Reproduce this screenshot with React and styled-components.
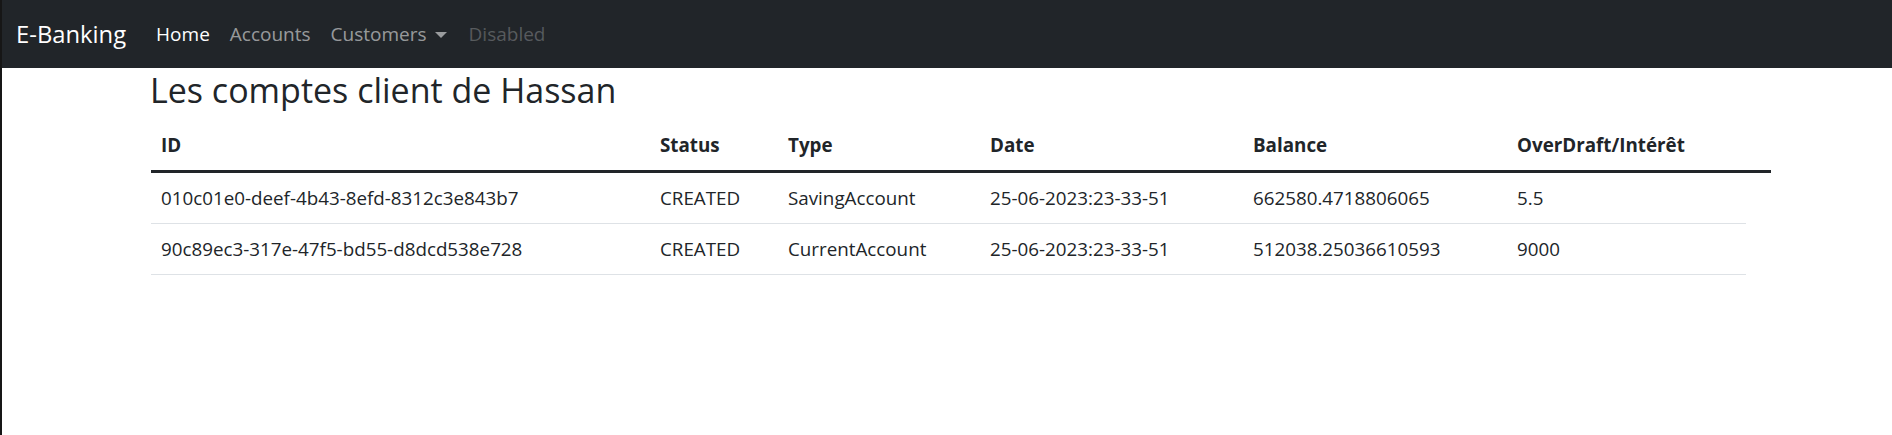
import React from "react";
import styled, { createGlobalStyle } from "styled-components";

const FONT = `"Open Sans", "Noto Sans", "Liberation Sans", sans-serif`;

const Global = createGlobalStyle`
  html, body { margin: 0; padding: 0; background: #fff; }
  body {
    font-family: ${FONT};
    color: #212529;
    border-left: 2px solid #161616;
    min-height: 435px;
    box-sizing: border-box;
  }
`;

const Navbar = styled.nav`
  display: flex;
  align-items: center;
  height: 68px;
  box-sizing: border-box;
  padding: 0 14px 0;
  background: #212529;
`;

const Brand = styled.a`
  font-size: 23.8px;
  line-height: 34px;
  color: #fff;
  text-decoration: none;
  margin-right: 20px;
  white-space: nowrap;
`;

const NavList = styled.ul`
  display: flex;
  align-items: center;
  list-style: none;
  margin: 0;
  padding: 0;
`;

const NavLink = styled.a`
  display: flex;
  align-items: baseline;
  padding: 0 10px;
  font-size: 19px;
  line-height: 30px;
  text-decoration: none;
  white-space: nowrap;
  color: ${(p) =>
    p.$active ? "#fff" : p.$disabled ? "rgba(255,255,255,0.25)" : "rgba(255,255,255,0.55)"};
`;

const Caret = styled.span`
  display: inline-block;
  width: 0;
  height: 0;
  margin-left: 8px;
  margin-right: 2px;
  border-top: 6px solid currentColor;
  border-left: 6px solid transparent;
  border-right: 6px solid transparent;
  align-self: center;
  position: relative;
  top: 1px;
`;

const Container = styled.main`
  margin-left: 149px;
  width: 1620px;
`;

const Title = styled.h3`
  margin: 0 0 7px -1px;
  font-size: 34px;
  line-height: 45px;
  font-weight: 500;
  color: #212529;
`;

const Table = styled.table`
  width: 1620px;
  border-collapse: collapse;
  table-layout: fixed;
  font-size: 18.8px;
  line-height: 30px;
  color: #212529;
`;

const Col = styled.col`
  width: ${(p) => p.$w}px;
`;

const Th = styled.th`
  padding: 10px;
  text-align: left;
  font-weight: 700;
  border-bottom: 1px solid #dee2e6;
  white-space: nowrap;
`;

const Body = styled.tbody`
  border-top: 3px solid #212529;
`;

const Td = styled.td`
  padding: 10px;
  border-bottom: 1px solid #dee2e6;
  white-space: nowrap;
`;

const widths = [499, 128, 202, 263, 264, 239, 25];
const headers = ["ID", "Status", "Type", "Date", "Balance", "OverDraft/Intérêt", ""];
const rows = [
  ["010c01e0-deef-4b43-8efd-8312c3e843b7", "CREATED", "SavingAccount", "25-06-2023:23-33-51", "662580.4718806065", "5.5"],
  ["90c89ec3-317e-47f5-bd55-d8dcd538e728", "CREATED", "CurrentAccount", "25-06-2023:23-33-51", "512038.25036610593", "9000"],
];

export default function App() {
  return (
    <>
      <Global />
      <Navbar>
        <Brand href="#">E-Banking</Brand>
        <NavList>
          <li><NavLink $active href="#">Home</NavLink></li>
          <li><NavLink href="#">Accounts</NavLink></li>
          <li><NavLink href="#">Customers<Caret /></NavLink></li>
          <li><NavLink $disabled>Disabled</NavLink></li>
        </NavList>
      </Navbar>
      <Container>
        <Title>Les comptes client de Hassan</Title>
        <Table>
          <colgroup>
            {widths.map((w, i) => <Col key={i} $w={w} />)}
          </colgroup>
          <thead>
            <tr>
              {headers.map((h, i) => <Th key={i}>{h}</Th>)}
            </tr>
          </thead>
          <Body>
            {rows.map((r) => (
              <tr key={r[0]}>
                {r.map((c, i) => <Td key={i}>{c}</Td>)}
              </tr>
            ))}
          </Body>
        </Table>
      </Container>
    </>
  );
}
